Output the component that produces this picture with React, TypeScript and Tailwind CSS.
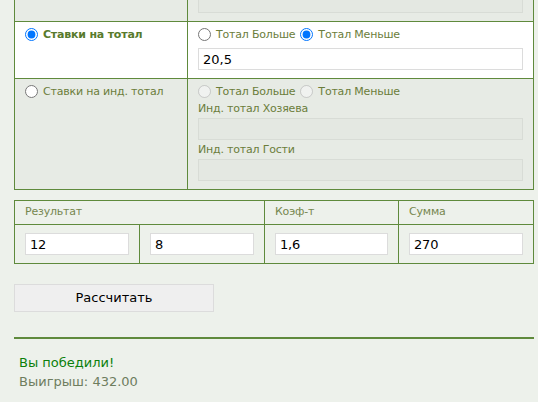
import React from "react";

const font = { fontFamily: '"DejaVu Sans", Verdana, sans-serif' };

const Radio = ({ name, checked, disabled }: { name: string; checked?: boolean; disabled?: boolean }) => (
  <input
    type="radio"
    name={name}
    defaultChecked={checked}
    disabled={disabled}
    className="w-[13px] h-[13px] m-0 shrink-0"
  />
);

const TextBox = ({ value, disabled, className = "" }: { value?: string; disabled?: boolean; className?: string }) => (
  <input
    type="text"
    defaultValue={value}
    disabled={disabled}
    className={
      "block h-[22px] px-1 text-[13px] text-black border outline-none " +
      (disabled ? "bg-[#e4e8e2] border-[#d8dcd6] " : "bg-white border-[#dcdcdc] ") +
      className
    }
  />
);

const TotalRadios = ({ name, check, disabled }: { name: string; check?: number; disabled?: boolean }) => (
  <div className="flex items-center h-[18px] text-[11px] tracking-[-0.2px] text-[#6b7d3b]">
    <Radio name={name} checked={check === 1} disabled={disabled} />
    <span className="ml-[5px] mr-[5px] pt-[2px]">Тотал Больше</span>
    <Radio name={name} checked={check === 2} disabled={disabled} />
    <span className="ml-[5px] pt-[2px]">Тотал Меньше</span>
  </div>
);

const Label = ({ children, className = "" }: { children: React.ReactNode; className?: string }) => (
  <div className={"h-[18px] flex items-center pt-[1px] text-[11px] tracking-[-0.2px] text-[#6b7d3b] " + className}>
    {children}
  </div>
);

export default function App() {
  return (
    <div className="min-h-[402px] bg-[#edf1eb] px-[14px] overflow-hidden" style={font}>
      {/* bet type table, scrolled so only the bottom of the first row shows */}
      <div className="w-[520px] mt-[-10px] border border-[#5f8a3c]">
        <div className="flex bg-[#e7ebe5]">
          <div className="w-[173px] border-r border-[#5f8a3c]" />
          <div className="flex-1 px-[10px] pb-[8px]">
            <TextBox disabled className="w-full" />
          </div>
        </div>

        <div className="flex bg-white border-t border-[#5f8a3c]">
          <div className="w-[173px] border-r border-[#5f8a3c] pl-[10px] pt-[3px]">
            <div className="flex items-center h-[18px] text-[11px] tracking-[-0.2px] font-bold text-[#587a2c]">
              <Radio name="type" checked />
              <span className="ml-[5px] pt-[2px]">Ставки на тотал</span>
            </div>
          </div>
          <div className="flex-1 px-[10px] pt-[3px] pb-[8px]">
            <TotalRadios name="total" check={2} />
            <TextBox value="20,5" className="w-full mt-[5px]" />
          </div>
        </div>

        <div className="flex bg-[#e7ebe5] border-t border-[#5f8a3c]">
          <div className="w-[173px] border-r border-[#5f8a3c] pl-[10px] pt-[3px]">
            <div className="flex items-center h-[18px] text-[11px] tracking-[-0.2px] text-[#6b7d3b]">
              <Radio name="type" />
              <span className="ml-[5px] pt-[2px]">Ставки на инд. тотал</span>
            </div>
          </div>
          <div className="flex-1 px-[10px] pt-[3px] pb-[8px]">
            <TotalRadios name="ind" disabled />
            <Label>Инд. тотал Хозяева</Label>
            <TextBox disabled className="w-full" />
            <Label className="mt-[1px]">Инд. тотал Гости</Label>
            <TextBox disabled className="w-full" />
          </div>
        </div>
      </div>

      {/* result table */}
      <div className="w-[520px] mt-[10px] border border-[#5f8a3c] text-[11px] tracking-[-0.2px] text-[#76874f]">
        <div className="flex h-[24px] border-b border-[#5f8a3c]">
          <div className="w-[250px] border-r border-[#5f8a3c] pl-[10px] flex items-center">Результат</div>
          <div className="w-[134px] border-r border-[#5f8a3c] pl-[10px] flex items-center">Коэф-т</div>
          <div className="flex-1 pl-[10px] flex items-center">Сумма</div>
        </div>
        <div className="flex">
          <div className="w-[125px] border-r border-[#5f8a3c] px-[10px] py-2">
            <TextBox value="12" className="w-full" />
          </div>
          <div className="w-[125px] border-r border-[#5f8a3c] px-[10px] py-2">
            <TextBox value="8" className="w-full" />
          </div>
          <div className="w-[134px] border-r border-[#5f8a3c] px-[10px] py-2">
            <TextBox value="1,6" className="w-full" />
          </div>
          <div className="flex-1 px-[10px] py-2">
            <TextBox value="270" className="w-full" />
          </div>
        </div>
      </div>

      <button className="mt-[20px] block w-[200px] h-[28px] bg-[#efefef] border border-[#dcdcdc] text-[13px] text-black">
        Рассчитать
      </button>

      <div className="mt-[25px] w-[520px] h-[2px] bg-[#5f8a3c]" />

      <div className="mt-[14px] pl-[5px] text-[13px] leading-[19px]">
        <div className="text-[#0b800b]">Вы победили!</div>
        <div className="text-[#6e7d5e]">Выигрыш: 432.00</div>
      </div>
    </div>
  );
}
